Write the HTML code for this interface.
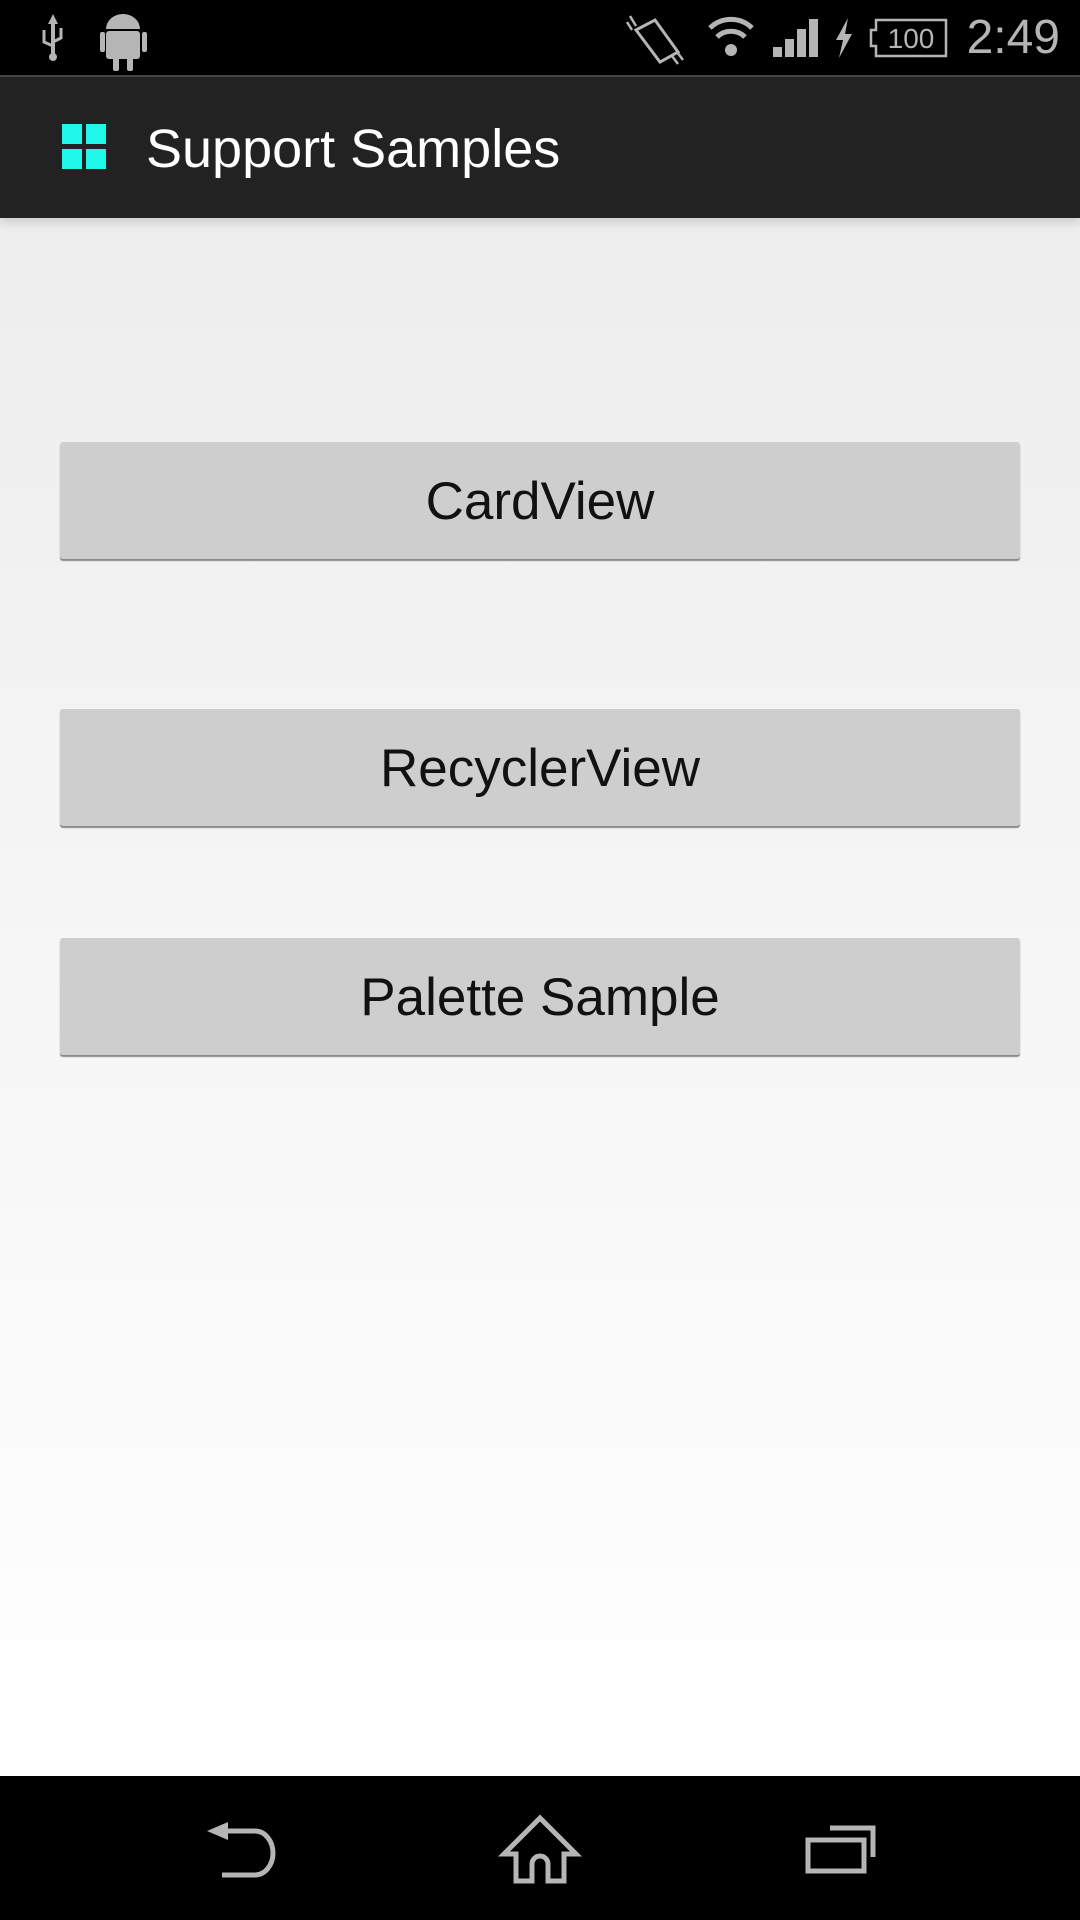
<!DOCTYPE html>
<html><head><style>
body{margin:0;width:1080px;height:1920px;position:relative;overflow:hidden;font-family:"Liberation Sans",sans-serif;background:linear-gradient(#ebebeb,#ffffff 1776px)}
.sb{position:absolute;top:0;left:0;width:1080px;height:75px;background:#000}
.ab{position:absolute;top:75px;left:0;width:1080px;height:143px;background:#222;border-top:2px solid #444;box-sizing:border-box;box-shadow:0 4px 10px rgba(0,0,0,.15)}
.title{position:absolute;left:146px;top:118px;color:#fff;font-size:54px;line-height:62px}
.btn{position:absolute;left:60px;width:960px;height:117px;background:#cecece;border-radius:3px;box-shadow:0 2px 1px #888;text-align:center;line-height:120px;font-size:53px;color:#111}
.nav{position:absolute;top:1776px;left:0;width:1080px;height:144px;background:#000}
</style></head><body>
<div class="sb">
<svg width="1080" height="75" style="position:absolute;left:0;top:0">
<g fill="#b5b5b5" stroke="#b5b5b5">
<path d="M53 14 L48 24 L58 24 Z" stroke="none"/>
<line x1="53" y1="20" x2="53" y2="56" stroke-width="4"/>
<path d="M44 30 L44 42 L53 46 M61 28 L61 38 L53 42" fill="none" stroke-width="3"/>
<circle cx="53" cy="57" r="4" stroke="none"/>
<rect x="106" y="31" width="34" height="28" rx="3" stroke="none"/>
<path d="M106 29 A17 15 0 0 1 140 29 Z" stroke="none"/>
<rect x="100" y="32" width="5" height="20" rx="2" stroke="none"/>
<rect x="142" y="32" width="5" height="20" rx="2" stroke="none"/>
<rect x="113" y="55" width="6" height="16" rx="2" stroke="none"/>
<rect x="127" y="55" width="6" height="16" rx="2" stroke="none"/>
<path d="M636 30 L655 20 L678 52 L660 62 Z" fill="none" stroke-width="3"/>
<path d="M630 16 L636 26 M627 22 L632 30 M672 56 L678 64 M677 52 L683 60" stroke-width="2.5"/>
<path d="M710 28 A30 30 0 0 1 752 28" fill="none" stroke-width="5"/>
<path d="M717 37 A20 20 0 0 1 745 37" fill="none" stroke-width="5"/>
<circle cx="731" cy="50" r="6" stroke="none"/>
<rect x="773" y="47" width="9" height="10" stroke="none"/>
<rect x="785" y="39" width="9" height="18" stroke="none"/>
<rect x="797" y="29" width="9" height="28" stroke="none"/>
<rect x="809" y="19" width="9" height="38" stroke="none"/>
<path d="M848 18 L836 40 L843 40 L839 58 L852 34 L845 34 Z" stroke="none"/>
<path d="M876 20 L946 20 L946 56 L876 56 L876 46 L871 46 L871 30 L876 30 Z" fill="none" stroke-width="2.5"/>
</g>
<text x="911" y="48" fill="#b5b5b5" font-size="28" text-anchor="middle" font-family="Liberation Sans">100</text>
<text x="1060" y="53" fill="#b5b5b5" font-size="48" text-anchor="end" font-family="Liberation Sans">2:49</text>
</svg>
</div>
<div class="ab"></div>
<svg width="50" height="50" style="position:absolute;left:62px;top:124px">
<rect x="0" y="0" width="20" height="20" fill="#1ff7ea"/><rect x="24" y="0" width="20" height="20" fill="#1ff7ea"/>
<rect x="0" y="25" width="20" height="20" fill="#1ff7ea"/><rect x="24" y="25" width="20" height="20" fill="#1ff7ea"/>
</svg>
<div class="title">Support Samples</div>
<div class="btn" style="top:442px">CardView</div>
<div class="btn" style="top:709px">RecyclerView</div>
<div class="btn" style="top:938px">Palette Sample</div>
<div class="nav">
<svg width="1080" height="144" style="position:absolute;left:0;top:0" fill="none" stroke="#b5b5b5" stroke-width="5">
<path d="M207 55 L228 46 L228 64 Z" fill="#b5b5b5" stroke="none"/>
<path d="M226 55 L255 55 A18 22 0 0 1 255 99 L222 99"/>
<path d="M540 42 L504 78 L516 78 L516 105 L532 105 L532 88 A8 8 0 0 1 548 88 L548 105 L564 105 L564 78 L576 78 Z" stroke-linejoin="miter"/>
<rect x="808" y="64" width="56" height="31"/>
<path d="M830 52 L873 52 L873 81"/>
</svg>
</div>
</body></html>
